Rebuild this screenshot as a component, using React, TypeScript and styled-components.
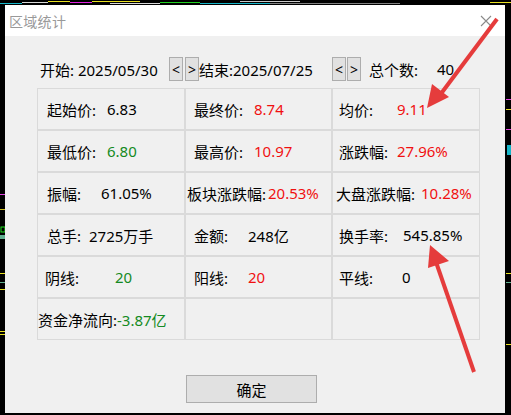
import styled, { createGlobalStyle } from "styled-components"

const Global = createGlobalStyle`
  html, body {
    margin: 0;
    padding: 0;
    background: #000;
  }
  body {
    font-family: "Noto Sans", "Noto Sans CJK SC", sans-serif;
  }
`

const Screen = styled.div`
  position: relative;
  width: 511px;
  height: 415px;
  background: #000;
  overflow: hidden;
`

const Middle = styled.div`
  display: flex;
`

const Dialog = styled.div`
  width: 500px;
  height: 408px;
  display: flex;
  flex-direction: column;
  background: #f0f0f0;
`

const TitleBar = styled.div`
  height: 31px;
  background: #fff;
  display: flex;
  align-items: center;
  justify-content: space-between;
  padding: 0 13px 0 4px;
`

const Title = styled.div`
  color: #999;
  font-family: "Noto Sans CJK SC", sans-serif;
  font-size: 14px;
  letter-spacing: 0.3px;
`

const Body = styled.div`
  flex: 1;
  display: flex;
  flex-direction: column;
  padding: 21px 0 0 32px;
`

const Controls = styled.div`
  display: flex;
  align-items: center;
  height: 24px;
  padding-left: 3px;
  font-size: 15px;
  color: #000;
`

const Text = styled.span<{ $w?: number; $ml?: number }>`
  display: inline-block;
  width: ${(p) => (p.$w ? `${p.$w}px` : "auto")};
  margin-left: ${(p) => p.$ml || 0}px;
  white-space: nowrap;
`

const Arrow = styled.div<{ $ml?: number }>`
  width: 12px;
  height: 22px;
  margin-left: ${(p) => p.$ml || 0}px;
  border: 1px solid #adadad;
  background: #e1e1e1;
  display: flex;
  align-items: center;
  justify-content: center;
  font-size: 14px;
`

const Grid = styled.div`
  margin-top: 7px;
  display: grid;
  grid-template-columns: 148px 147px 148px;
  grid-auto-rows: 42px;
  width: 443px;
`

const Cell = styled.div<{ $pad: number }>`
  border: 1px solid #dadada;
  display: flex;
  align-items: center;
  padding-left: ${(p) => p.$pad - 1}px;
  font-size: 15px;
  white-space: nowrap;
`

const Label = styled.span<{ $w: number }>`
  display: inline-block;
  width: ${(p) => p.$w}px;
  color: #000;
`

const Value = styled.span<{ $tone: "red" | "green" | "black" }>`
  color: ${(p) => (p.$tone === "red" ? "#f01010" : p.$tone === "green" ? "#148a22" : "#000")};
`

const Footer = styled.div`
  display: flex;
  padding: 35px 0 0 149px;
`

const OkButton = styled.button`
  width: 131px;
  height: 28px;
  border: 1px solid #adadad;
  background: #e1e1e1;
  font-family: "Noto Sans CJK SC", sans-serif;
  font-size: 15px;
  color: #000;
  padding: 0;
`

const Overlay = styled.svg`
  position: absolute;
  left: 0;
  top: 0;
  pointer-events: none;
`

type Item = { label: string; value: string; tone: "red" | "green" | "black"; pad: number; lw: number }

const rows: (Item | null)[][] = [
  [
    { label: "起始价:", value: "6.83", tone: "black", pad: 10, lw: 60 },
    { label: "最终价:", value: "8.74", tone: "red", pad: 9, lw: 60 },
    { label: "均价:", value: "9.11", tone: "red", pad: 7, lw: 58 },
  ],
  [
    { label: "最低价:", value: "6.80", tone: "green", pad: 10, lw: 60 },
    { label: "最高价:", value: "10.97", tone: "red", pad: 9, lw: 60 },
    { label: "涨跌幅:", value: "27.96%", tone: "red", pad: 7, lw: 58 },
  ],
  [
    { label: "振幅:", value: "61.05%", tone: "black", pad: 10, lw: 54 },
    { label: "板块涨跌幅:", value: "20.53%", tone: "red", pad: 2, lw: 81 },
    { label: "大盘涨跌幅:", value: "10.28%", tone: "red", pad: 4, lw: 85 },
  ],
  [
    { label: "总手:", value: "2725万手", tone: "black", pad: 10, lw: 42 },
    { label: "金额:", value: "248亿", tone: "black", pad: 9, lw: 54 },
    { label: "换手率:", value: "545.85%", tone: "black", pad: 7, lw: 64 },
  ],
  [
    { label: "阴线:", value: "20", tone: "green", pad: 8, lw: 70 },
    { label: "阳线:", value: "20", tone: "red", pad: 9, lw: 54 },
    { label: "平线:", value: "0", tone: "black", pad: 7, lw: 63 },
  ],
  [{ label: "资金净流向:", value: "-3.87亿", tone: "green", pad: 1, lw: 79 }, null, null],
]

const TopStrip = () => (
  <svg width="511" height="5" style={{ display: "block" }}>
    <rect width="511" height="5" fill="#000" />
    <line x1="0" y1="3.5" x2="22" y2="3.5" stroke="#15b5c8" strokeWidth="1" />
    <line x1="22" y1="2.5" x2="48" y2="2.5" stroke="#d8d8d8" strokeWidth="1" />
    <line x1="48" y1="1.5" x2="70" y2="1.5" stroke="#e8e020" strokeWidth="1" />
    <line x1="70" y1="2.5" x2="92" y2="2.5" stroke="#e020e0" strokeWidth="1" />
    <line x1="92" y1="1.5" x2="140" y2="1.5" stroke="#e8e020" strokeWidth="1" />
    <line x1="110" y1="3.5" x2="160" y2="3.5" stroke="#d8d8d8" strokeWidth="1" />
    <line x1="160" y1="2.5" x2="200" y2="2.5" stroke="#20d020" strokeWidth="1" />
    <line x1="200" y1="3.5" x2="270" y2="3.5" stroke="#15b5c8" strokeWidth="1" />
    <line x1="240" y1="1.5" x2="300" y2="1.5" stroke="#c8c8c8" strokeWidth="1" />
    <line x1="270" y1="3.5" x2="400" y2="3.5" stroke="#808080" strokeWidth="1" />
    <line x1="490" y1="2.5" x2="511" y2="2.5" stroke="#e8e020" strokeWidth="1" />
  </svg>
)

const LeftStrip = () => (
  <svg width="5" height="408" style={{ display: "block" }}>
    <rect width="5" height="408" fill="#000" />
    <line x1="0" y1="189.5" x2="5" y2="189.5" stroke="#e040e0" />
    <line x1="0" y1="204.5" x2="5" y2="204.5" stroke="#d0c020" />
    <rect x="1" y="222" width="4" height="5" fill="none" stroke="#20e020" />
    <rect x="0" y="230" width="5" height="4" fill="#60b090" />
    <line x1="0" y1="268.5" x2="5" y2="268.5" stroke="#e8e020" />
    <line x1="0" y1="277.5" x2="5" y2="277.5" stroke="#60b090" />
    <line x1="0" y1="284.5" x2="5" y2="284.5" stroke="#e8e020" />
    <line x1="0" y1="326.5" x2="5" y2="326.5" stroke="#e8e020" />
    <line x1="0" y1="329.5" x2="5" y2="329.5" stroke="#e8e020" />
  </svg>
)

const RightStrip = () => (
  <svg width="6" height="408" style={{ display: "block" }}>
    <rect width="6" height="408" fill="#000" />
    <line x1="1" y1="124.5" x2="6" y2="124.5" stroke="#e040e0" />
    <rect x="2" y="140" width="4" height="10" fill="#15b5c8" />
    <line x1="1" y1="94.5" x2="6" y2="94.5" stroke="#e040e0" />
    <line x1="1" y1="104.5" x2="6" y2="104.5" stroke="#e8e020" />
    <line x1="1" y1="268.5" x2="6" y2="268.5" stroke="#e8e020" />
    <line x1="1" y1="277.5" x2="6" y2="277.5" stroke="#60b090" />
    <line x1="1" y1="339.5" x2="6" y2="339.5" stroke="#e8e020" />
  </svg>
)

const CloseIcon = () => (
  <svg width="12" height="12" viewBox="0 0 12 12">
    <path d="M1 1 L11 11 M11 1 L1 11" stroke="#8a8a8a" strokeWidth="1.1" fill="none" />
  </svg>
)

export default function App() {
  return (
    <>
      <Global />
      <Screen>
        <TopStrip />
        <Middle>
          <LeftStrip />
          <Dialog>
            <TitleBar>
              <Title>区域统计</Title>
              <CloseIcon />
            </TitleBar>
            <Body>
              <Controls>
                <Text $w={129}>开始: 2025/05/30</Text>
                <Arrow>&lt;</Arrow>
                <Arrow $ml={2}>&gt;</Arrow>
                <Text $w={133}>结束:2025/07/25</Text>
                <Arrow>&lt;</Arrow>
                <Arrow $ml={1}>&gt;</Arrow>
                <Text $w={68} $ml={8}>总个数:</Text>
                <Text>40</Text>
              </Controls>
              <Grid>
                {rows.flatMap((row, r) =>
                  row.map((item, c) => (
                    <Cell key={`${r}-${c}`} $pad={item ? item.pad : 0}>
                      {item && (
                        <>
                          <Label $w={item.lw}>{item.label}</Label>
                          <Value $tone={item.tone}>{item.value}</Value>
                        </>
                      )}
                    </Cell>
                  ))
                )}
              </Grid>
              <Footer>
                <OkButton>确定</OkButton>
              </Footer>
            </Body>
          </Dialog>
          <RightStrip />
        </Middle>
        <Overlay width="511" height="415">
          <line x1="497" y1="19" x2="440" y2="95" stroke="#e53c3c" strokeWidth="4" />
          <polygon points="427,108 432,84 449,97" fill="#e53c3c" />
          <line x1="474" y1="372" x2="436" y2="262" stroke="#e53c3c" strokeWidth="4" />
          <polygon points="430,245 428,268 449,261" fill="#e53c3c" />
        </Overlay>
      </Screen>
    </>
  )
}
